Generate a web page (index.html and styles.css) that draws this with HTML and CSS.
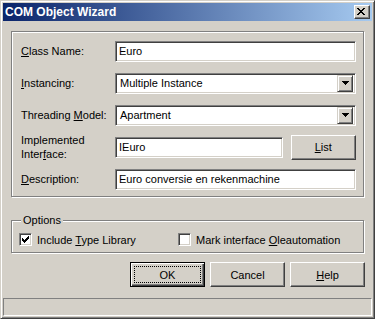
FILE: index.html
```html
<!DOCTYPE html>
<html lang="en">
<head>
    <meta charset="UTF-8">
    <title>COM Object Wizard</title>
    <link rel="stylesheet" href="styles.css">
</head>
<body>

<div class="window">
    <div class="titlebar">
        <span class="title">COM Object Wizard</span>
        <span class="close">
            <svg width="8" height="7" viewBox="0 0 8 7" shape-rendering="crispEdges">
                <rect x="0" y="0" width="2" height="1"/><rect x="6" y="0" width="2" height="1"/>
                <rect x="1" y="1" width="2" height="1"/><rect x="5" y="1" width="2" height="1"/>
                <rect x="2" y="2" width="4" height="1"/>
                <rect x="3" y="3" width="2" height="1"/>
                <rect x="2" y="4" width="4" height="1"/>
                <rect x="1" y="5" width="2" height="1"/><rect x="5" y="5" width="2" height="1"/>
                <rect x="0" y="6" width="2" height="1"/><rect x="6" y="6" width="2" height="1"/>
            </svg>
        </span>
    </div>

    <div class="content">
        <div class="group main">
            <div class="row">
                <label class="lbl"><u>C</u>lass Name:</label>
                <input class="field" type="text" value="Euro">
            </div>
            <div class="row">
                <label class="lbl"><u>I</u>nstancing:</label>
                <div class="combo">
                    <span class="combo-text">Multiple Instance</span>
                    <span class="combo-btn">
                        <svg width="7" height="4" viewBox="0 0 7 4" shape-rendering="crispEdges">
                            <rect x="0" y="0" width="7" height="1"/><rect x="1" y="1" width="5" height="1"/>
                            <rect x="2" y="2" width="3" height="1"/><rect x="3" y="3" width="1" height="1"/>
                        </svg>
                    </span>
                </div>
            </div>
            <div class="row">
                <label class="lbl">Threading <u>M</u>odel:</label>
                <div class="combo">
                    <span class="combo-text">Apartment</span>
                    <span class="combo-btn">
                        <svg width="7" height="4" viewBox="0 0 7 4" shape-rendering="crispEdges">
                            <rect x="0" y="0" width="7" height="1"/><rect x="1" y="1" width="5" height="1"/>
                            <rect x="2" y="2" width="3" height="1"/><rect x="3" y="3" width="1" height="1"/>
                        </svg>
                    </span>
                </div>
            </div>
            <div class="row">
                <label class="lbl two-line">Implemented<br>Inter<u>f</u>ace:</label>
                <input class="field short" type="text" value="IEuro">
                <button class="btn list" type="button"><span><u>L</u>ist</span></button>
            </div>
            <div class="row">
                <label class="lbl"><u>D</u>escription:</label>
                <input class="field" type="text" value="Euro conversie en rekenmachine">
            </div>
        </div>

        <div class="group options">
            <span class="legend">Options</span>
            <div class="checks">
                <label class="check">
                    <span class="box">
                        <svg width="7" height="7" viewBox="0 0 7 7" shape-rendering="crispEdges">
                            <rect x="6" y="0" width="1" height="1"/>
                            <rect x="5" y="1" width="2" height="1"/>
                            <rect x="0" y="2" width="1" height="1"/><rect x="4" y="2" width="3" height="1"/>
                            <rect x="0" y="3" width="2" height="1"/><rect x="3" y="3" width="3" height="1"/>
                            <rect x="0" y="4" width="5" height="1"/>
                            <rect x="1" y="5" width="3" height="1"/>
                            <rect x="2" y="6" width="1" height="1"/>
                        </svg>
                    </span>
                    <span>Include <u>T</u>ype Library</span>
                </label>
                <label class="check">
                    <span class="box"></span>
                    <span>Mark interface <u>O</u>leautomation</span>
                </label>
            </div>
        </div>

        <div class="buttons">
            <button class="btn default" type="button"><span class="focus">OK</span></button>
            <button class="btn" type="button">Cancel</button>
            <button class="btn" type="button"><span><u>H</u>elp</span></button>
        </div>
    </div>

    <div class="statusbar"></div>
</div>

</body>
</html>
```

FILE: styles.css
```css
body {
    margin: 0;
    font-family: "Liberation Sans", Arial, sans-serif;
    font-size: 11px;
    color: #000;
    background: #d4d0c8;
}

u {
    text-decoration: underline;
    text-underline-offset: 1px;
}

.window {
    box-sizing: border-box;
    width: 375px;
    height: 319px;
    padding: 2px;
    background: #d4d0c8;
    border: 1px solid;
    border-color: #d4d0c8 #404040 #404040 #d4d0c8;
    box-shadow: inset 1px 1px #fff, inset -1px -1px #808080;
    display: flex;
    flex-direction: column;
}

.titlebar {
    height: 18px;
    display: flex;
    align-items: center;
    justify-content: space-between;
    background: linear-gradient(to right, #0a246a, #a6caf0);
}

.title {
    padding-left: 2px;
    color: #fff;
    font-weight: bold;
    font-size: 12px;
}

.close {
    box-sizing: border-box;
    width: 16px;
    height: 14px;
    margin-right: 2px;
    background: #d4d0c8;
    border: 1px solid;
    border-color: #fff #404040 #404040 #fff;
    box-shadow: inset -1px -1px #808080;
    display: flex;
    padding: 2px 0 0 2px;
}

.content {
    margin-top: 10px;
    padding: 0 8px;
}

.group {
    position: relative;
    border: 1px solid #808080;
    box-shadow: 1px 1px 0 #fff, inset 1px 1px 0 #fff;
}

.main {
    padding: 3px 7px 1px 9px;
}

.row {
    height: 32px;
    display: flex;
    align-items: center;
}

.lbl {
    flex: none;
    width: 94px;
}

.two-line {
    line-height: 14px;
}

.field,
.combo {
    box-sizing: border-box;
    width: 241px;
    height: 21px;
    margin: 0;
    background: #fff;
    border: 1px solid;
    border-color: #808080 #fff #fff #808080;
    box-shadow: inset 1px 1px #404040, inset -1px -1px #d4d0c8;
    font: inherit;
    color: #000;
}

.field {
    padding: 0 3px;
    outline: none;
}

.field.short {
    width: 169px;
}

.combo {
    display: flex;
    align-items: center;
    padding: 1px 2px 1px 4px;
}

.combo-text {
    flex: 1;
}

.combo-btn {
    box-sizing: border-box;
    width: 16px;
    height: 17px;
    background: #d4d0c8;
    border: 1px solid;
    border-color: #d4d0c8 #404040 #404040 #d4d0c8;
    box-shadow: inset 1px 1px #fff, inset -1px -1px #808080;
    display: flex;
    align-items: center;
    justify-content: center;
}

.btn {
    box-sizing: border-box;
    width: 75px;
    height: 25px;
    padding: 0;
    background: #d4d0c8;
    border: 1px solid;
    border-color: #fff #404040 #404040 #fff;
    box-shadow: inset -1px -1px #808080;
    font: inherit;
    color: #000;
    display: flex;
    align-items: center;
    justify-content: center;
}

.btn.list {
    width: 66px;
    margin-left: 8px;
}

.btn.default {
    border: 1px solid #000;
    box-shadow: inset 1px 1px #fff, inset -1px -1px #404040, inset -2px -2px #808080;
    padding: 3px;
}

.focus {
    flex: 1;
    align-self: stretch;
    border: 1px dotted #000;
    display: flex;
    align-items: center;
    justify-content: center;
}

.options {
    margin-top: 23px;
    padding: 12px 0 6px 7px;
}

.legend {
    position: absolute;
    top: -7px;
    left: 9px;
    padding: 0 2px;
    line-height: 13px;
    background: #d4d0c8;
}

.checks {
    display: grid;
    grid-template-columns: 159px auto;
    height: 13px;
}

.check {
    display: flex;
    align-items: center;
}

.box {
    box-sizing: border-box;
    width: 13px;
    height: 13px;
    margin-right: 5px;
    padding: 2px 0 0 2px;
    background: #fff;
    border: 1px solid;
    border-color: #808080 #fff #fff #808080;
    box-shadow: inset 1px 1px #404040, inset -1px -1px #d4d0c8;
    display: flex;
}

.buttons {
    margin-top: 9px;
    margin-right: -1px;
    display: flex;
    justify-content: flex-end;
    gap: 5px;
}

.statusbar {
    margin-top: auto;
    height: 18px;
    box-sizing: border-box;
    border: 1px solid;
    border-color: #808080 #fff #fff #808080;
}
```
